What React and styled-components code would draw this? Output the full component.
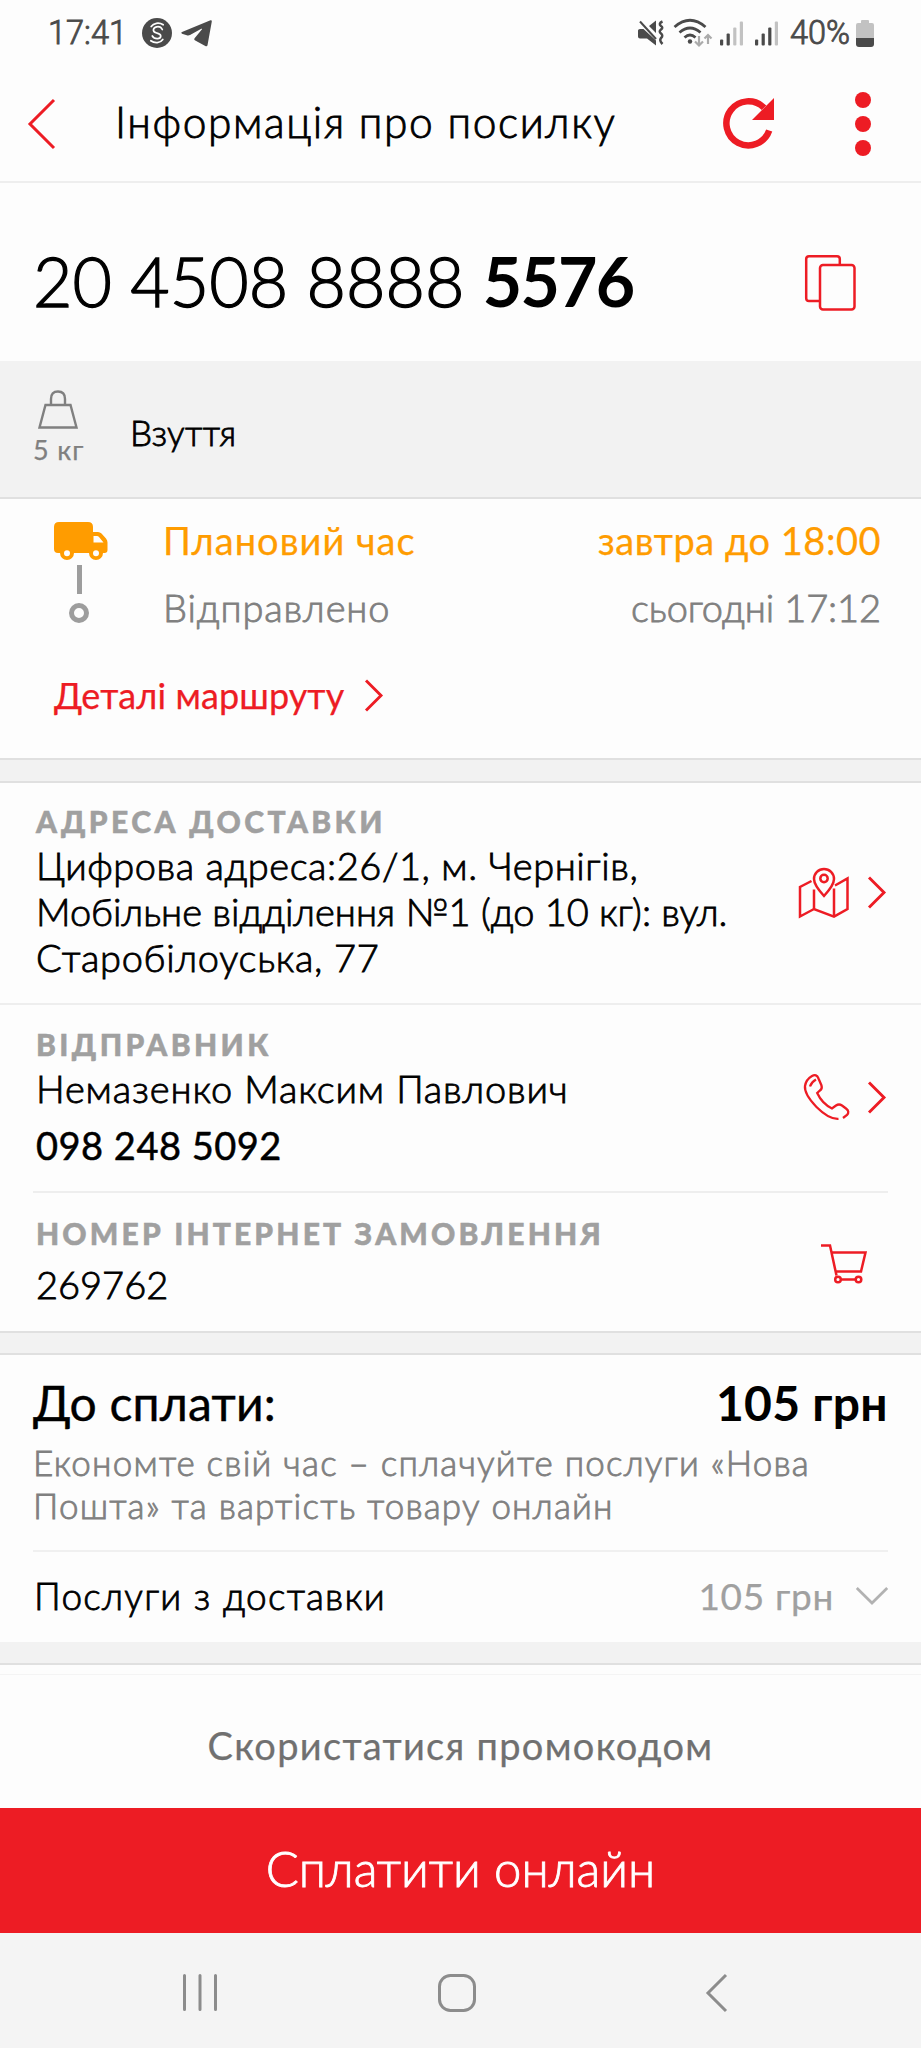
import React from "react";
import styled, { createGlobalStyle } from "styled-components";

const red = "#ed1c24";
const orange = "#ff9c00";

const GlobalStyle = createGlobalStyle`
  *, *::before, *::after { box-sizing: border-box; }
  body {
    margin: 0;
    background: #fdfdfd;
    color: #000;
    font-family: Lato, "Open Sans", sans-serif;
  }
  svg { display: block; flex: none; overflow: visible; }
`;

const Screen = styled.main`
  width: 921px;
  height: 2048px;
  display: flex;
  flex-direction: column;
  overflow: hidden;
`;

const strokeByWeight = { 300: 0.85, 400: 0.25, 700: 0 };

const Text = styled.span`
  display: block;
  white-space: nowrap;
  font-size: ${(p) => p.$size}px;
  line-height: ${(p) => p.$line ?? 46}px;
  font-weight: ${(p) => p.$weight ?? 300};
  letter-spacing: ${(p) => p.$track ?? 0}px;
  color: ${(p) => p.$color ?? "#000"};
  -webkit-text-stroke: ${(p) => p.$stroke ?? strokeByWeight[p.$weight ?? 300]}px currentColor;
`;

const StatusBar = styled.div`
  height: 66px;
  padding: 0 47px 0 48px;
  display: flex;
  align-items: center;
  justify-content: space-between;
  font-family: Roboto, sans-serif;
`;

const StatusGroup = styled.div`
  display: flex;
  align-items: center;
  gap: ${(p) => p.$gap}px;
`;

const Header = styled.header`
  height: 117px;
  padding: 0 49px 0 28px;
  display: flex;
  align-items: center;
  border-bottom: 2px solid #eee;
`;

const HeaderTitle = styled.h1`
  flex: 1;
  margin: 0 0 4px 60px;
`;

const HeaderActions = styled.div`
  display: flex;
  align-items: center;
  gap: 81px;
`;

const TrackingNumber = styled.section`
  height: 178px;
  padding: 21px 65px 0 33px;
  display: flex;
  align-items: center;
  justify-content: space-between;
`;

const NumberText = styled(Text)`
  margin-bottom: 4px;
  b { font-weight: 700; letter-spacing: ${(p) => p.$boldTrack}px; -webkit-text-stroke: 0; }
`;

const CargoBand = styled.section`
  height: 138px;
  padding: 29px 33px 0;
  display: flex;
  background: #f2f2f2;
  border-bottom: 2px solid #e0e0e0;
`;

const Weight = styled.div`
  width: 97px;
  display: flex;
  flex-direction: column;
  gap: 3px;
  svg { margin-left: 5px; }
`;

const CargoName = styled.div`
  padding-top: 19px;
`;

const Route = styled.section`
  height: 259px;
  padding: 18px 40px 0 54px;
  display: flex;
  flex-direction: column;
  gap: 42px;
`;

const RouteSteps = styled.div`
  display: flex;
  gap: 55px;
`;

const Timeline = styled.div`
  width: 54px;
  padding-top: 5px;
`;

const TimelineBar = styled.div`
  width: 5px;
  height: 29px;
  margin: 4px 0 9px 23px;
  background: #9d9d9d;
`;

const TimelineDot = styled.div`
  width: 20px;
  height: 20px;
  margin-left: 15px;
  border: 5px solid #9d9d9d;
  border-radius: 50%;
`;

const StepList = styled.div`
  flex: 1;
  display: flex;
  flex-direction: column;
  gap: 21px;
`;

const Step = styled.div`
  display: flex;
  justify-content: space-between;
`;

const RouteLink = styled.a`
  display: flex;
  align-items: center;
  gap: 21px;
`;

const Divider = styled.div`
  flex: none;
  height: ${(p) => p.$height}px;
  background: #f2f2f2;
  border-top: ${(p) => (p.$open ? "0" : "2px solid #e0e0e0")};
  border-bottom: 2px solid #e0e0e0;
`;

const InfoSection = styled.section`
  height: ${(p) => p.$height}px;
  margin: 0 ${(p) => (p.$inset ? 33 : 0)}px;
  padding: ${(p) => p.$top}px ${(p) => (p.$inset ? 0 : 33)}px 0 ${(p) => (p.$inset ? 3 : 36)}px;
  display: flex;
  justify-content: space-between;
  border-bottom: ${(p) => (p.$rule ? "2px solid #eee" : "0")};
`;

const InfoText = styled.div`
  display: flex;
  flex-direction: column;
`;

const Label = styled(Text)`
  font-size: 30px;
  line-height: 36px;
  font-weight: 900;
  color: #a0a0a0;
  margin-bottom: ${(p) => p.$after}px;
  -webkit-text-stroke: 0.5px currentColor;
`;

const PhoneNumber = styled(Text)`
  margin-top: 11px;
`;

const InfoAction = styled.div`
  display: flex;
  align-items: center;
  gap: ${(p) => p.$gap ?? 0}px;
  height: ${(p) => p.$height}px;
  padding-right: ${(p) => p.$right ?? 0}px;
`;

const Payment = styled.section`
  height: 197px;
  margin: 0 33px;
  padding-top: 20px;
  border-bottom: 2px solid #f0f0f0;
`;

const Row = styled.div`
  display: flex;
  align-items: center;
  justify-content: space-between;
`;

const PaymentNote = styled.p`
  margin: 10px 0 0 0;
`;

const ServiceRow = styled(Row)`
  height: 90px;
  margin: 0 33px;
  padding: 0 0 3px 1px;
`;

const ServicePrice = styled.div`
  display: flex;
  align-items: center;
  gap: 22px;
`;

const Promo = styled.section`
  height: 143px;
  padding-top: 9px;
`;

const PromoButton = styled.button`
  width: 100%;
  height: 134px;
  padding: 7px 0 0;
  border: 0;
  border-top: 1px solid #f4f4f4;
  background: transparent;
  display: flex;
  align-items: center;
  justify-content: center;
  font-family: inherit;
`;

const PayButton = styled.button`
  height: 125px;
  padding: 0 0 5px;
  border: 0;
  background: ${red};
  display: flex;
  align-items: center;
  justify-content: center;
  font-family: inherit;
`;

const NavBar = styled.nav`
  height: 115px;
  padding: 4px 194px 0 183px;
  background: #f4f4f4;
  display: grid;
  grid-template-columns: 255px 1fr auto;
  align-items: center;
`;

const dark = "#4a4a4a";
const pale = "#c2c2c2";

const CoinIcon = () => (
  <svg width="30" height="30" viewBox="0 0 30 30" fill="none" stroke="#fff" strokeWidth="1.7" strokeLinecap="round">
    <circle cx="15" cy="15" r="15" fill={dark} stroke="none" />
    <path d="M20.3 11.5C19 8.8 16.5 8.4 14.6 8.8c-3.6.8-4.6 4.6-.6 6l2.4.8c3.6 1.3 2.8 4.8-.8 5-2 .1-4-.3-5.3-2.6" />
    <path d="M9.2 8.5C11.5 5 17 4 21.2 6.8M8.8 22.7c4 3 9.5 2.5 12-1.2" />
  </svg>
);

const PlaneIcon = () => (
  <svg width="31" height="27" viewBox="0 0 31 27">
    <path d="M29.5 0.3Q31 0 30.8 1.6L26.5 25.3Q26 27 24.3 26L13.8 20.3Q12.6 19.4 13.6 18.3L21 9.2Q21.4 8.4 20.3 8.8L9 15Q7.5 15.700 5.8 15.2L1 13.7Q-.6 12.9 1 12Z" fill={dark} />
  </svg>
);

const MuteIcon = () => (
  <svg width="25" height="26" viewBox="0 0 25 26" fill="none" stroke={dark} strokeWidth="2">
    <path d="M0 10.5Q0 9 2 9h3.5L18 20.5V25.5L9 18.5H2Q0 18.5 0 16.5ZM11 6L18 0.5V13Z" fill={dark} stroke="none" />
    <path d="M2 1.500L18 19" />
    <path d="M24.5 1.5q-4.5 2-1.5 4.5 2.5 1.5 0 3.5t0 4 0 4.5q-2 2.5 1.5 6" strokeWidth="2.5" />
  </svg>
);

const WifiIcon = () => (
  <svg width="35" height="28" viewBox="0 0 35 28" fill="none" stroke={dark} strokeWidth="2.8">
    <path d="M0.5 8Q16-5.5 31.5 8M5.5 13.5Q16 4.5 26.5 13.5M10.5 18.5Q16 13.5 21.500 18.5" />
    <circle cx="16" cy="22.5" r="2.2" fill={dark} stroke="none" />
    <path d="M25 17v9M21 22.5l4 4 4-4M34 25v-9M30.5 19.5L34 16l3.5 3.5" stroke="#ababab" strokeWidth="2.2" />
  </svg>
);

const SignalIcon = ({ level }) => (
  <svg width="24" height="25" viewBox="0 0 24 25">
    {[18, 12, 6, 0].map((y, i) => (
      <rect key={y} x={i * 6.6} y={y + 0.5} width="3.2" height={24 - y} rx="1" fill={i < level ? dark : pale} />
    ))}
  </svg>
);

const BatteryIcon = () => (
  <svg width="18" height="27" viewBox="0 0 18 27">
    <path d="M5 3V1q0-1 1-1h6q1 0 1 1v2h3q2 0 2 2v13H0V5q0-2 2-2Z" fill={pale} />
    <path d="M0 18h18v6q0 3-3 3H3q-3 0-3-3Z" fill={dark} />
  </svg>
);

const BackIcon = () => (
  <svg width="27" height="50" viewBox="0 0 27 50" fill="none" stroke={red} strokeWidth="3">
    <path d="M26 1L2 25l24 24" />
  </svg>
);

const RefreshIcon = () => (
  <svg width="51" height="51" viewBox="0 0 51 51" fill="none">
    <path d="M46.2 32.5A22 22 0 1 1 41 9.8" stroke={red} strokeWidth="6.5" />
    <path d="M51 0v22H29Z" fill={red} />
  </svg>
);

const MoreIcon = () => (
  <svg width="17" height="64" viewBox="0 0 17 64" fill={red}>
    <circle cx="8" cy="8" r="8" />
    <circle cx="8" cy="32" r="8" />
    <circle cx="8" cy="56" r="8" />
  </svg>
);

const CopyIcon = () => (
  <svg width="51" height="56" viewBox="0 0 51 56" fill="none" stroke={red} strokeWidth="2.5">
    <path d="M14 46H4q-2.8 0-2.8-2.8V4Q1.2 1.2 4 1.2h28q2.8 0 2.8 2.8v5" />
    <rect x="15" y="10" width="34.5" height="44.5" rx="3" />
  </svg>
);

const WeightIcon = () => (
  <svg width="40" height="39" viewBox="0 0 40 39" fill="none" stroke="#808080" strokeWidth="2.4">
    <path d="M7.5 15h25L38.5 37.5H1.5Z" />
    <path d="M13 15V9q0-7.5 7-7.5T27 9v6" />
  </svg>
);

const TruckIcon = () => (
  <svg width="54" height="39" viewBox="0 0 54 39">
    <path
      fillRule="evenodd"
      fill={orange}
      d="M5 0h29q5 0 5 5v5h5q2 0 3.5 1.5l4.5 5q1.5 1.8 1.5 4V28q0 3-3 3h-1.5a7 7 0 0 1-14 0H20a7 7 0 0 1-14 0H4q-4 0-4-4V5Q0 0 5 0ZM39.5 14v6.5h10L45 15q-.8-1-2-1ZM13 28.2a3 3 0 1 0 0 6 3 3 0 0 0 0-6ZM42 28.2a3 3 0 1 0 0 6 3 3 0 0 0 0-6Z"
    />
  </svg>
);

const ChevronRight = () => (
  <svg width="17" height="31" viewBox="0 0 17 31" fill="none" stroke={red} strokeWidth="2.9">
    <path d="M1 0.5l15 15-15 15" />
  </svg>
);

const MapIcon = () => (
  <svg width="50" height="50" viewBox="0 0 50 50" fill="none" stroke={red} strokeWidth="2.5">
    <path d="M12.5 13L1 19v29.5L15 41l20 7.7L48.5 41V10.5L36 17.5" />
    <path d="M15 21.5V41M35 20.5v28" />
    <path d="M25 28Q15 17 15 11a10 10 0 0 1 20 0q0 6-10 17Z" />
    <circle cx="25" cy="10.5" r="3.7" />
  </svg>
);

const PhoneIcon = () => (
  <svg width="45" height="46" viewBox="0 0 45 46" fill="none" stroke={red} strokeWidth="2.3">
    <path d="M34.5 44.8Q25 45.5 12.5 33 0 20 1 12 2 5.5 8 2 12.5-.5 14.5 4.5l3 7q1 3-1.5 5l-2.8 2.5Q18 29.5 28 34.5l4-3q3-2 6 0l4 3q4 3 1 6.5l-4 3" />
    <path d="M6 12.5Q7.5 8 12 5.5" />
  </svg>
);

const CartIcon = () => (
  <svg width="46" height="39" viewBox="0 0 46 39" fill="none" stroke={red} strokeWidth="2.5">
    <path d="M0 1.5h9l6.5 30M10.5 8.5h34L40 27.500H14.5M19.5 35.5h15" />
    <circle cx="17" cy="35.5" r="2.8" />
    <circle cx="37.5" cy="35.5" r="2.8" />
  </svg>
);

const ChevronDown = () => (
  <svg width="32" height="17" viewBox="0 0 32 17" fill="none" stroke="#b2b2b2" strokeWidth="2.7">
    <path d="M0.8 1L16 16 31.2 1" />
  </svg>
);

const RecentsIcon = () => (
  <svg width="34" height="37" viewBox="0 0 34 37" stroke="#8c8c8c" strokeWidth="3" strokeLinecap="round">
    <path d="M1.5 1.5v34M17 1.5v34M32.5 1.5v34" />
  </svg>
);

const HomeIcon = () => (
  <svg width="38" height="38" viewBox="0 0 38 38" fill="none" stroke="#8c8c8c" strokeWidth="3">
    <rect x="1.5" y="1.5" width="35" height="35" rx="11" />
  </svg>
);

const NavBackIcon = () => (
  <svg width="21" height="38" viewBox="0 0 21 38" fill="none" stroke="#8c8c8c" strokeWidth="3">
    <path d="M20 1L2 19l18 18" />
  </svg>
);

export default function App() {
  return (
    <>
      <GlobalStyle />
      <Screen>
        <StatusBar>
          <StatusGroup $gap={15}>
            <Text $size={32.5} $color={dark}>17:41</Text>
            <StatusGroup $gap={9}>
              <CoinIcon />
              <PlaneIcon />
            </StatusGroup>
          </StatusGroup>
          <StatusGroup $gap={11}>
            <MuteIcon />
            <WifiIcon />
            <SignalIcon level={2} />
            <SignalIcon level={3} />
            <StatusGroup $gap={6}>
              <Text $size={32.5} $color={dark}>40%</Text>
              <BatteryIcon />
            </StatusGroup>
          </StatusGroup>
        </StatusBar>

        <Header>
          <BackIcon />
          <HeaderTitle>
            <Text $size={42.5} $track={1.6}>Інформація про посилку</Text>
          </HeaderTitle>
          <HeaderActions>
            <RefreshIcon />
            <MoreIcon />
          </HeaderActions>
        </Header>

        <TrackingNumber>
          <NumberText $size={68} $line={80} $boldTrack={-1.8} $stroke={1.3}>
            20 4508 8888 <b>5576</b>
          </NumberText>
          <CopyIcon />
        </TrackingNumber>

        <CargoBand>
          <Weight>
            <WeightIcon />
            <Text $size={27} $line={36} $weight={400} $track={0.9} $color="#808080">5 кг</Text>
          </Weight>
          <CargoName>
            <Text $size={35} $track={0.4}>Взуття</Text>
          </CargoName>
        </CargoBand>

        <Route>
          <RouteSteps>
            <Timeline>
              <TruckIcon />
              <TimelineBar />
              <TimelineDot />
            </Timeline>
            <StepList>
              <Step>
                <Text $size={38} $weight={400} $track={1} $color={orange}>Плановий час</Text>
                <Text $size={38} $weight={400} $track={0.5} $color={orange}>завтра до 18:00</Text>
              </Step>
              <Step>
                <Text $size={38} $track={0.9} $color="#808080">Відправлено</Text>
                <Text $size={38} $track={-0.1} $color="#808080">сьогодні 17:12</Text>
              </Step>
            </StepList>
          </RouteSteps>
          <RouteLink>
            <Text $size={36} $weight={400} $track={0.1} $color={red}>Деталі маршруту</Text>
            <ChevronRight />
          </RouteLink>
        </Route>

        <Divider $height={25} />

        <InfoSection $height={222} $top={20} $rule>
          <InfoText>
            <Label $track={3.4} $after={3}>АДРЕСА ДОСТАВКИ</Label>
            <Text $size={38} $track={0.55}>Цифрова адреса:26/1, м. Чернігів,</Text>
            <Text $size={38}>Мобільне відділення №1 (до 10 кг): вул.</Text>
            <Text $size={38} $track={0.7}>Старобілоуська, 77</Text>
          </InfoText>
          <InfoAction $gap={19} $height={179} $right={3}>
            <MapIcon />
            <ChevronRight />
          </InfoAction>
        </InfoSection>

        <InfoSection $height={188} $top={21} $rule $inset>
          <InfoText>
            <Label $track={3.4} $after={3}>ВІДПРАВНИК</Label>
            <Text $size={38} $track={0.85}>Немазенко Максим Павлович</Text>
            <PhoneNumber $size={38} $weight={400} $stroke={0.5} $track={0.5}>098 248 5092</PhoneNumber>
          </InfoText>
          <InfoAction $gap={19} $height={142} $right={3}>
            <PhoneIcon />
            <ChevronRight />
          </InfoAction>
        </InfoSection>

        <InfoSection $height={138} $top={22} $inset>
          <InfoText>
            <Label $track={3.15} $after={10}>НОМЕР ІНТЕРНЕТ ЗАМОВЛЕННЯ</Label>
            <Text $size={38}>269762</Text>
          </InfoText>
          <InfoAction $height={96} $right={21}>
            <CartIcon />
          </InfoAction>
        </InfoSection>

        <Divider $height={24} />

        <Payment>
          <Row>
            <Text $size={48} $line={56} $weight={400} $stroke={0.4} $track={0.2}>До сплати:</Text>
            <Text $size={48} $line={56} $weight={700} $track={0.3}>105 грн</Text>
          </Row>
          <PaymentNote>
            <Text $size={35} $line={43} $track={1.2} $color="#808080">Економте свій час – сплачуйте послуги «Нова</Text>
            <Text $size={35} $line={43} $track={1.2} $color="#808080">Пошта» та вартість товару онлайн</Text>
          </PaymentNote>
        </Payment>

        <ServiceRow>
          <Text $size={37} $track={1.25}>Послуги з доставки</Text>
          <ServicePrice>
            <Text $size={37} $weight={400} $track={0.7} $color="#a0a0a0">105 грн</Text>
            <ChevronDown />
          </ServicePrice>
        </ServiceRow>

        <Divider $height={23} $open />

        <Promo>
          <PromoButton>
            <Text $size={38} $weight={400} $track={1.3} $color="#707070">Скористатися промокодом</Text>
          </PromoButton>
        </Promo>
        <PayButton>
          <Text $size={49} $line={60} $color="#fff">Сплатити онлайн</Text>
        </PayButton>

        <NavBar>
          <RecentsIcon />
          <HomeIcon />
          <NavBackIcon />
        </NavBar>
      </Screen>
    </>
  );
}
